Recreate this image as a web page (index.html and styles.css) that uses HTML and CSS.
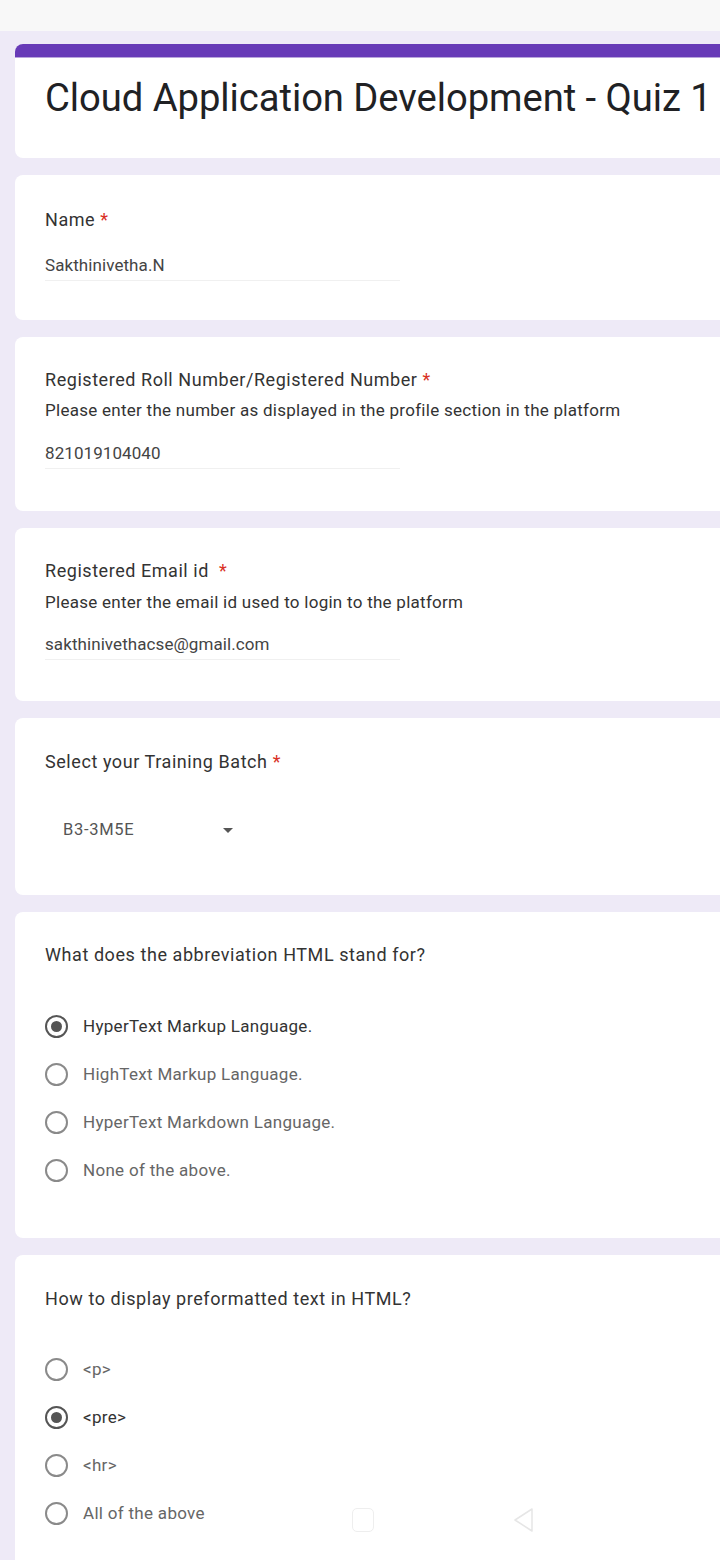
FILE: index.html
```html
<!DOCTYPE html>
<html>
<head>
<meta charset="utf-8">
<link rel="stylesheet" href="styles.css">
</head>
<body>
<div class="topbar"></div>
<main class="page">
  <section class="card header-card">
    <div class="accent"></div>
    <h1 class="title">Cloud Application Development - Quiz 1</h1>
  </section>

  <section class="card q-name">
    <div class="label">Name <span class="req">*</span></div>
    <div class="answer">Sakthinivetha.N</div>
  </section>

  <section class="card q-roll">
    <div class="label">Registered Roll Number/Registered Number <span class="req">*</span></div>
    <div class="desc">Please enter the number as displayed in the profile section in the platform</div>
    <div class="answer">821019104040</div>
  </section>

  <section class="card q-email">
    <div class="label">Registered Email id &nbsp;<span class="req">*</span></div>
    <div class="desc">Please enter the email id used to login to the platform</div>
    <div class="answer">sakthinivethacse@gmail.com</div>
  </section>

  <section class="card q-batch">
    <div class="label wide">Select your Training Batch <span class="req">*</span></div>
    <div class="dropdown">
      <span class="dd-value">B3-3M5E</span>
      <span class="dd-arrow"></span>
    </div>
  </section>

  <section class="card q-mcq">
    <div class="label wide">What does the abbreviation HTML stand for?</div>
    <ul class="options">
      <li class="option checked"><span class="radio"></span><span class="opt-text">HyperText Markup Language.</span></li>
      <li class="option"><span class="radio"></span><span class="opt-text">HighText Markup Language.</span></li>
      <li class="option"><span class="radio"></span><span class="opt-text">HyperText Markdown Language.</span></li>
      <li class="option"><span class="radio"></span><span class="opt-text">None of the above.</span></li>
    </ul>
  </section>

  <section class="card q-mcq last">
    <div class="label wide">How to display preformatted text in HTML?</div>
    <ul class="options">
      <li class="option"><span class="radio"></span><span class="opt-text">&lt;p&gt;</span></li>
      <li class="option checked"><span class="radio"></span><span class="opt-text">&lt;pre&gt;</span></li>
      <li class="option"><span class="radio"></span><span class="opt-text">&lt;hr&gt;</span></li>
      <li class="option"><span class="radio"></span><span class="opt-text">All of the above</span></li>
    </ul>
  </section>
</main>
<div class="navhint">
  <span class="nav-home"></span>
  <svg class="nav-back" width="22" height="26" viewBox="0 0 22 26"><path d="M20 2 L3 13 L20 24 Z" fill="none" stroke="#e6e6e6" stroke-width="1.5" stroke-linejoin="round"/></svg>
</div>
</body>
</html>
```
FILE: styles.css
```css
html, body {
  margin: 0;
  padding: 0;
}
body {
  width: 720px;
  height: 1560px;
  overflow: hidden;
  background: #eeeaf7;
  font-family: Roboto, "Noto Sans", sans-serif;
  color: #333;
  position: relative;
}
.topbar {
  height: 31px;
  background: #f8f8f8;
}
.page {
  display: flex;
  flex-direction: column;
  gap: 17px;
  padding: 13px 0 0 15px;
}
.card {
  background: #fff;
  border-radius: 8px;
  margin-right: -30px;
  padding: 0 0 0 30px;
  box-sizing: border-box;
}
.header-card {
  height: 114px;
  overflow: hidden;
  padding: 0;
}
.accent {
  height: 13px;
  background: #673ab7;
  border-bottom: 1px solid #b9a5dc;
}
.title {
  margin: 0;
  padding: 16px 0 0 30px;
  font-weight: 400;
  font-size: 38.2px;
  line-height: 48px;
  color: #202124;
  letter-spacing: -0.05px;
  white-space: nowrap;
}
.label {
  font-size: 18px;
  line-height: 24px;
  color: #333;
  letter-spacing: 0.55px;
  white-space: nowrap;
}
.label.wide {
  letter-spacing: 0.57px;
}
.req {
  color: #d93025;
}
.desc {
  font-size: 17px;
  line-height: 22px;
  color: #333;
  letter-spacing: 0.27px;
  white-space: nowrap;
}
.answer {
  width: 355px;
  font-size: 17px;
  line-height: 22px;
  color: #444;
  padding-bottom: 4px;
  border-bottom: 1px solid #f0f0f0;
  letter-spacing: 0.08px;
}
.q-name {
  height: 145px;
  padding-top: 33px;
}
.q-name .answer {
  margin-top: 22px;
}
.q-roll, .q-email {
  height: 174px;
  padding-top: 31px;
}
.q-roll .desc {
  margin-top: 7px;
}
.q-roll .answer {
  margin-top: 21px;
}
.q-email {
  height: 173px;
}
.q-email .desc {
  margin-top: 8px;
}
.q-email .answer {
  margin-top: 20px;
}
.q-batch {
  height: 177px;
  padding-top: 32px;
}
.dropdown {
  display: flex;
  align-items: center;
  margin-top: 44px;
  padding-left: 18px;
  height: 22px;
}
.dd-value {
  width: 160px;
  font-size: 16.5px;
  color: #555;
  letter-spacing: 0.7px;
}
.dd-arrow {
  width: 0;
  height: 0;
  border-left: 5px solid transparent;
  border-right: 5px solid transparent;
  border-top: 5px solid #555;
  margin-top: 2px;
}
.q-mcq {
  height: 326px;
  padding-top: 31px;
}
.q-mcq.last {
  height: 330px;
  padding-top: 32px;
}
.options {
  list-style: none;
  margin: 47px 0 0 0;
  padding: 0;
  display: flex;
  flex-direction: column;
  gap: 24px;
}
.q-mcq.last .options {
  margin-top: 46px;
}
.option {
  display: flex;
  align-items: center;
  height: 24px;
  font-size: 17px;
  letter-spacing: 0.3px;
  color: #666;
}
.option.checked {
  color: #333;
}
.radio {
  width: 19px;
  height: 19px;
  border: 2px solid #8a8a8a;
  border-radius: 50%;
  margin-right: 15px;
  flex: none;
  position: relative;
  box-sizing: content-box;
}
.option.checked .radio {
  border-color: #555;
}
.option.checked .radio::after {
  content: "";
  position: absolute;
  left: 4px;
  top: 4px;
  width: 11px;
  height: 11px;
  border-radius: 50%;
  background: #555;
}
.navhint {
  position: absolute;
  left: 0;
  right: 0;
  top: 1505px;
  height: 30px;
}
.nav-home {
  position: absolute;
  left: 352px;
  top: 3px;
  width: 20px;
  height: 22px;
  border: 1.5px solid #eeeeee;
  border-radius: 5px;
}
.nav-back {
  position: absolute;
  left: 512px;
  top: 2px;
}
```
